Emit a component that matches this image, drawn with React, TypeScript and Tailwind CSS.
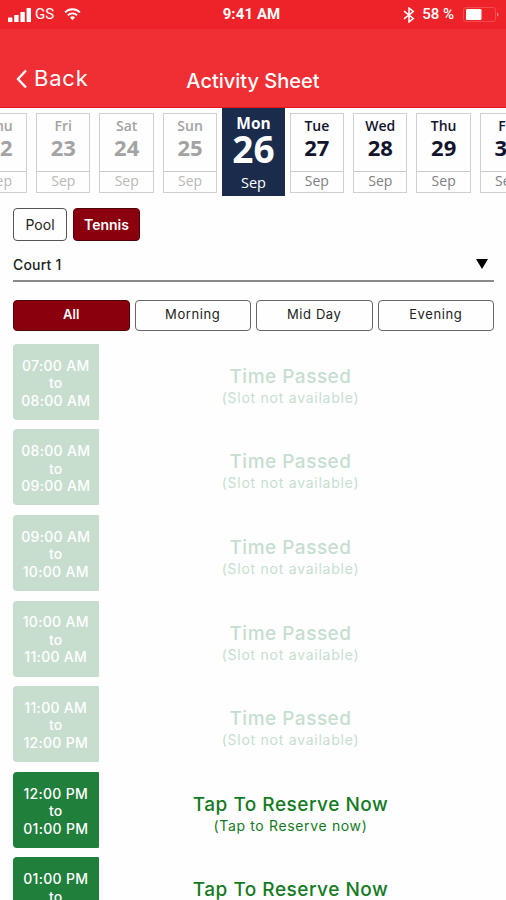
import { useState } from "react";
import clsx from "clsx";

type Day = {
  name: string;
  date: number;
  month: string;
};

type Slot = {
  from: string;
  to: string;
  available: boolean;
};

const DAYS: Day[] = [
  { name: "Thu", date: 22, month: "Sep" },
  { name: "Fri", date: 23, month: "Sep" },
  { name: "Sat", date: 24, month: "Sep" },
  { name: "Sun", date: 25, month: "Sep" },
  { name: "Mon", date: 26, month: "Sep" },
  { name: "Tue", date: 27, month: "Sep" },
  { name: "Wed", date: 28, month: "Sep" },
  { name: "Thu", date: 29, month: "Sep" },
  { name: "Fri", date: 30, month: "Sep" },
];

const TODAY = 26;

const ACTIVITIES = ["Pool", "Tennis"];

const PERIODS = ["All", "Morning", "Mid Day", "Evening"];

const SLOTS: Slot[] = [
  { from: "07:00 AM", to: "08:00 AM", available: false },
  { from: "08:00 AM", to: "09:00 AM", available: false },
  { from: "09:00 AM", to: "10:00 AM", available: false },
  { from: "10:00 AM", to: "11:00 AM", available: false },
  { from: "11:00 AM", to: "12:00 PM", available: false },
  { from: "12:00 PM", to: "01:00 PM", available: true },
  { from: "01:00 PM", to: "02:00 PM", available: true },
];

function StatusBar() {
  return (
    <div className="grid h-[29px] shrink-0 grid-cols-3 items-center bg-[#ee2329] font-[Roboto,sans-serif] text-white">
      <div className="flex items-center pl-2">
        <svg width="23" height="14" viewBox="0 0 23 14" fill="currentColor">
          <rect x="0" y="9.5" width="4.4" height="4.5" rx="0.6" />
          <rect x="6.2" y="7" width="4.4" height="7" rx="0.6" />
          <rect x="12.4" y="4" width="4.4" height="10" rx="0.6" />
          <rect x="18.6" y="0" width="4.4" height="14" rx="0.6" />
        </svg>
        <span className="ml-1 text-[15px] leading-none">GS</span>
        <svg className="ml-[10px]" width="17" height="13" viewBox="0 0 18 14" fill="none" stroke="currentColor" strokeWidth="2">
          <path d="M1 4.8C5.5 .2 12.5 .2 17 4.8" />
          <path d="M4 7.9C6.8 5 11.2 5 14 7.9" />
          <path d="M6.3 10.2C7.8 8.6 10.2 8.6 11.7 10.2L9 13.2Z" fill="currentColor" stroke="none" />
        </svg>
      </div>
      <span className="pr-[3px] text-center text-[15px] font-bold leading-none tracking-[0.1px]">9:41 AM</span>
      <div className="flex items-center justify-end pr-[6px]">
        <svg width="12" height="16" viewBox="0 0 12 16" fill="none" stroke="currentColor" strokeWidth="1.5">
          <path d="M1 4.2L10.3 11.4L6 15V1L10.3 4.6L1 11.8" />
        </svg>
        <span className="ml-[7px] text-[15px] font-medium leading-none">58 %</span>
        <svg className="ml-[9px]" width="37" height="15" viewBox="0 0 37 15" fill="none">
          <rect x="0.5" y="0.5" width="32" height="14" rx="2.5" stroke="#f04c50" />
          <rect x="3" y="2" width="15.5" height="11" rx="1" fill="white" />
          <path d="M34 5.5V9.5C36 9 36 6 34 5.5Z" fill="#f58286" />
        </svg>
      </div>
    </div>
  );
}

function DayCard({ day, selected, onSelect }: { day: Day; selected: boolean; onSelect: () => void }) {
  if (selected) {
    return (
      <button
        type="button"
        onClick={onSelect}
        className="-mx-[4.6px] flex h-[88px] w-[63.6px] shrink-0 flex-col items-center bg-[#1a2b4c] text-white"
      >
        <span className="mt-[7px] text-[15.5px] font-bold leading-4">{day.name}</span>
        <span className="-mt-px text-[37px] font-bold leading-[37px]">{day.date}</span>
        <span className="mt-1.5 text-[14.5px] leading-5">{day.month}</span>
      </button>
    );
  }

  const passed = day.date < TODAY;

  return (
    <button
      type="button"
      onClick={onSelect}
      className={clsx(
        "mt-[5px] flex h-20 w-[54.4px] shrink-0 flex-col items-center border border-[#cfcfd4]",
        passed ? "text-[#a3a3a3]" : "text-[#12142e]",
      )}
    >
      <span className="mt-[4px] text-[14px] font-semibold leading-4">{day.name}</span>
      <span className="mt-px text-[22px] font-bold leading-[25px]">{day.date}</span>
      <span
        className={clsx(
          "mt-[11px] w-full border-t border-[#c9c9ce] text-center text-[14px] leading-[17px]",
          passed ? "text-[#b8b8b8]" : "text-[#808084]",
        )}
      >
        {day.month}
      </span>
    </button>
  );
}

function SlotRow({ slot }: { slot: Slot }) {
  return (
    <li className={clsx("flex h-[76px] shrink-0", slot.available ? "text-[#147a24]" : "text-[#c6decf]")}>
      <div
        className={clsx(
          "flex w-[85.5px] flex-col items-center justify-center rounded-l rounded-r-[1px] pt-0.5 text-[14px] font-medium leading-[17.5px] tracking-[0.3px] text-white",
          slot.available ? "bg-[#217f3c]" : "bg-[#c7decf]",
        )}
      >
        <span>{slot.from}</span>
        <span>to</span>
        <span>{slot.to}</span>
      </div>
      <button type="button" disabled={!slot.available} className="flex flex-1 flex-col items-center pt-5 pr-[11.5px]">
        <span className="text-[19px] font-medium leading-[26px] tracking-[0.5px]">
          {slot.available ? "Tap To Reserve Now" : "Time Passed"}
        </span>
        <span className={clsx("text-[14px] leading-4", slot.available ? "tracking-[0.65px]" : "tracking-[0.75px]")}>
          {slot.available ? "(Tap to Reserve now)" : "(Slot not available)"}
        </span>
      </button>
    </li>
  );
}

export default function App() {
  const [selectedDate, setSelectedDate] = useState(TODAY);
  const [activity, setActivity] = useState("Tennis");
  const [period, setPeriod] = useState("All");

  return (
    <div className="flex h-[900px] w-[506px] flex-col overflow-hidden bg-[#fefefe] font-[Inter,sans-serif] text-[#222]">
      <StatusBar />

      <header className="grid h-[78.5px] shrink-0 grid-cols-3 items-center border-b border-[#e3161d] bg-[#ef2f34] pt-[22px] text-white">
        <button type="button" className="flex items-center pl-4">
          <svg width="11" height="20" viewBox="0 0 11 20" fill="none" stroke="currentColor" strokeWidth="2.4">
            <path d="M10 1.5L2 10L10 18.5" />
          </svg>
          <span className="-mt-0.5 ml-[7px] text-[22px] leading-6 tracking-[0.8px]">Back</span>
        </button>
        <h1 className="whitespace-nowrap pt-1 text-center text-[20px] font-medium leading-6">Activity Sheet</h1>
      </header>

      <nav className="-ml-[27.3px] flex w-[580px] shrink-0 gap-[9px] font-['Open_Sans',sans-serif]">
        {DAYS.map((day) => (
          <DayCard
            key={day.date}
            day={day}
            selected={day.date === selectedDate}
            onSelect={() => setSelectedDate(day.date)}
          />
        ))}
      </nav>

      <main className="flex min-h-0 flex-1 flex-col pt-3 pr-3 pl-[13px]">
        <div className="flex gap-1.5">
          {ACTIVITIES.map((name) => (
            <button
              key={name}
              type="button"
              onClick={() => setActivity(name)}
              className={clsx(
                "h-[33px] shrink-0 rounded border text-[14px]",
                name === activity
                  ? "border-[#4d0509] bg-[#8b000d] px-[10px] font-semibold text-white"
                  : "border-[#555] px-[11.5px]",
              )}
            >
              {name}
            </button>
          ))}
        </div>

        <button
          type="button"
          className="flex h-[41px] shrink-0 items-center justify-between border-b-2 border-[#8a8a8a] pt-2 pr-[6px] text-[14px] font-medium tracking-[0.2px]"
        >
          Court 1
          <svg className="text-black" width="12" height="10" viewBox="0 0 12 10" fill="currentColor">
            <path d="M0 0H12L6 10Z" />
          </svg>
        </button>

        <div className="mt-[18px] flex gap-[5px]">
          {PERIODS.map((name) => (
            <button
              key={name}
              type="button"
              onClick={() => setPeriod(name)}
              className={clsx(
                "h-[31px] flex-1 rounded border text-[13px]",
                name === period
                  ? "border-[#4d0509] bg-[#8b000d] font-semibold text-white"
                  : "border-[#666] tracking-[0.6px]",
              )}
            >
              {name}
            </button>
          ))}
        </div>

        <ul className="mt-[13.3px] flex flex-col gap-[9.6px]">
          {SLOTS.map((slot) => (
            <SlotRow key={slot.from} slot={slot} />
          ))}
        </ul>
      </main>
    </div>
  );
}
